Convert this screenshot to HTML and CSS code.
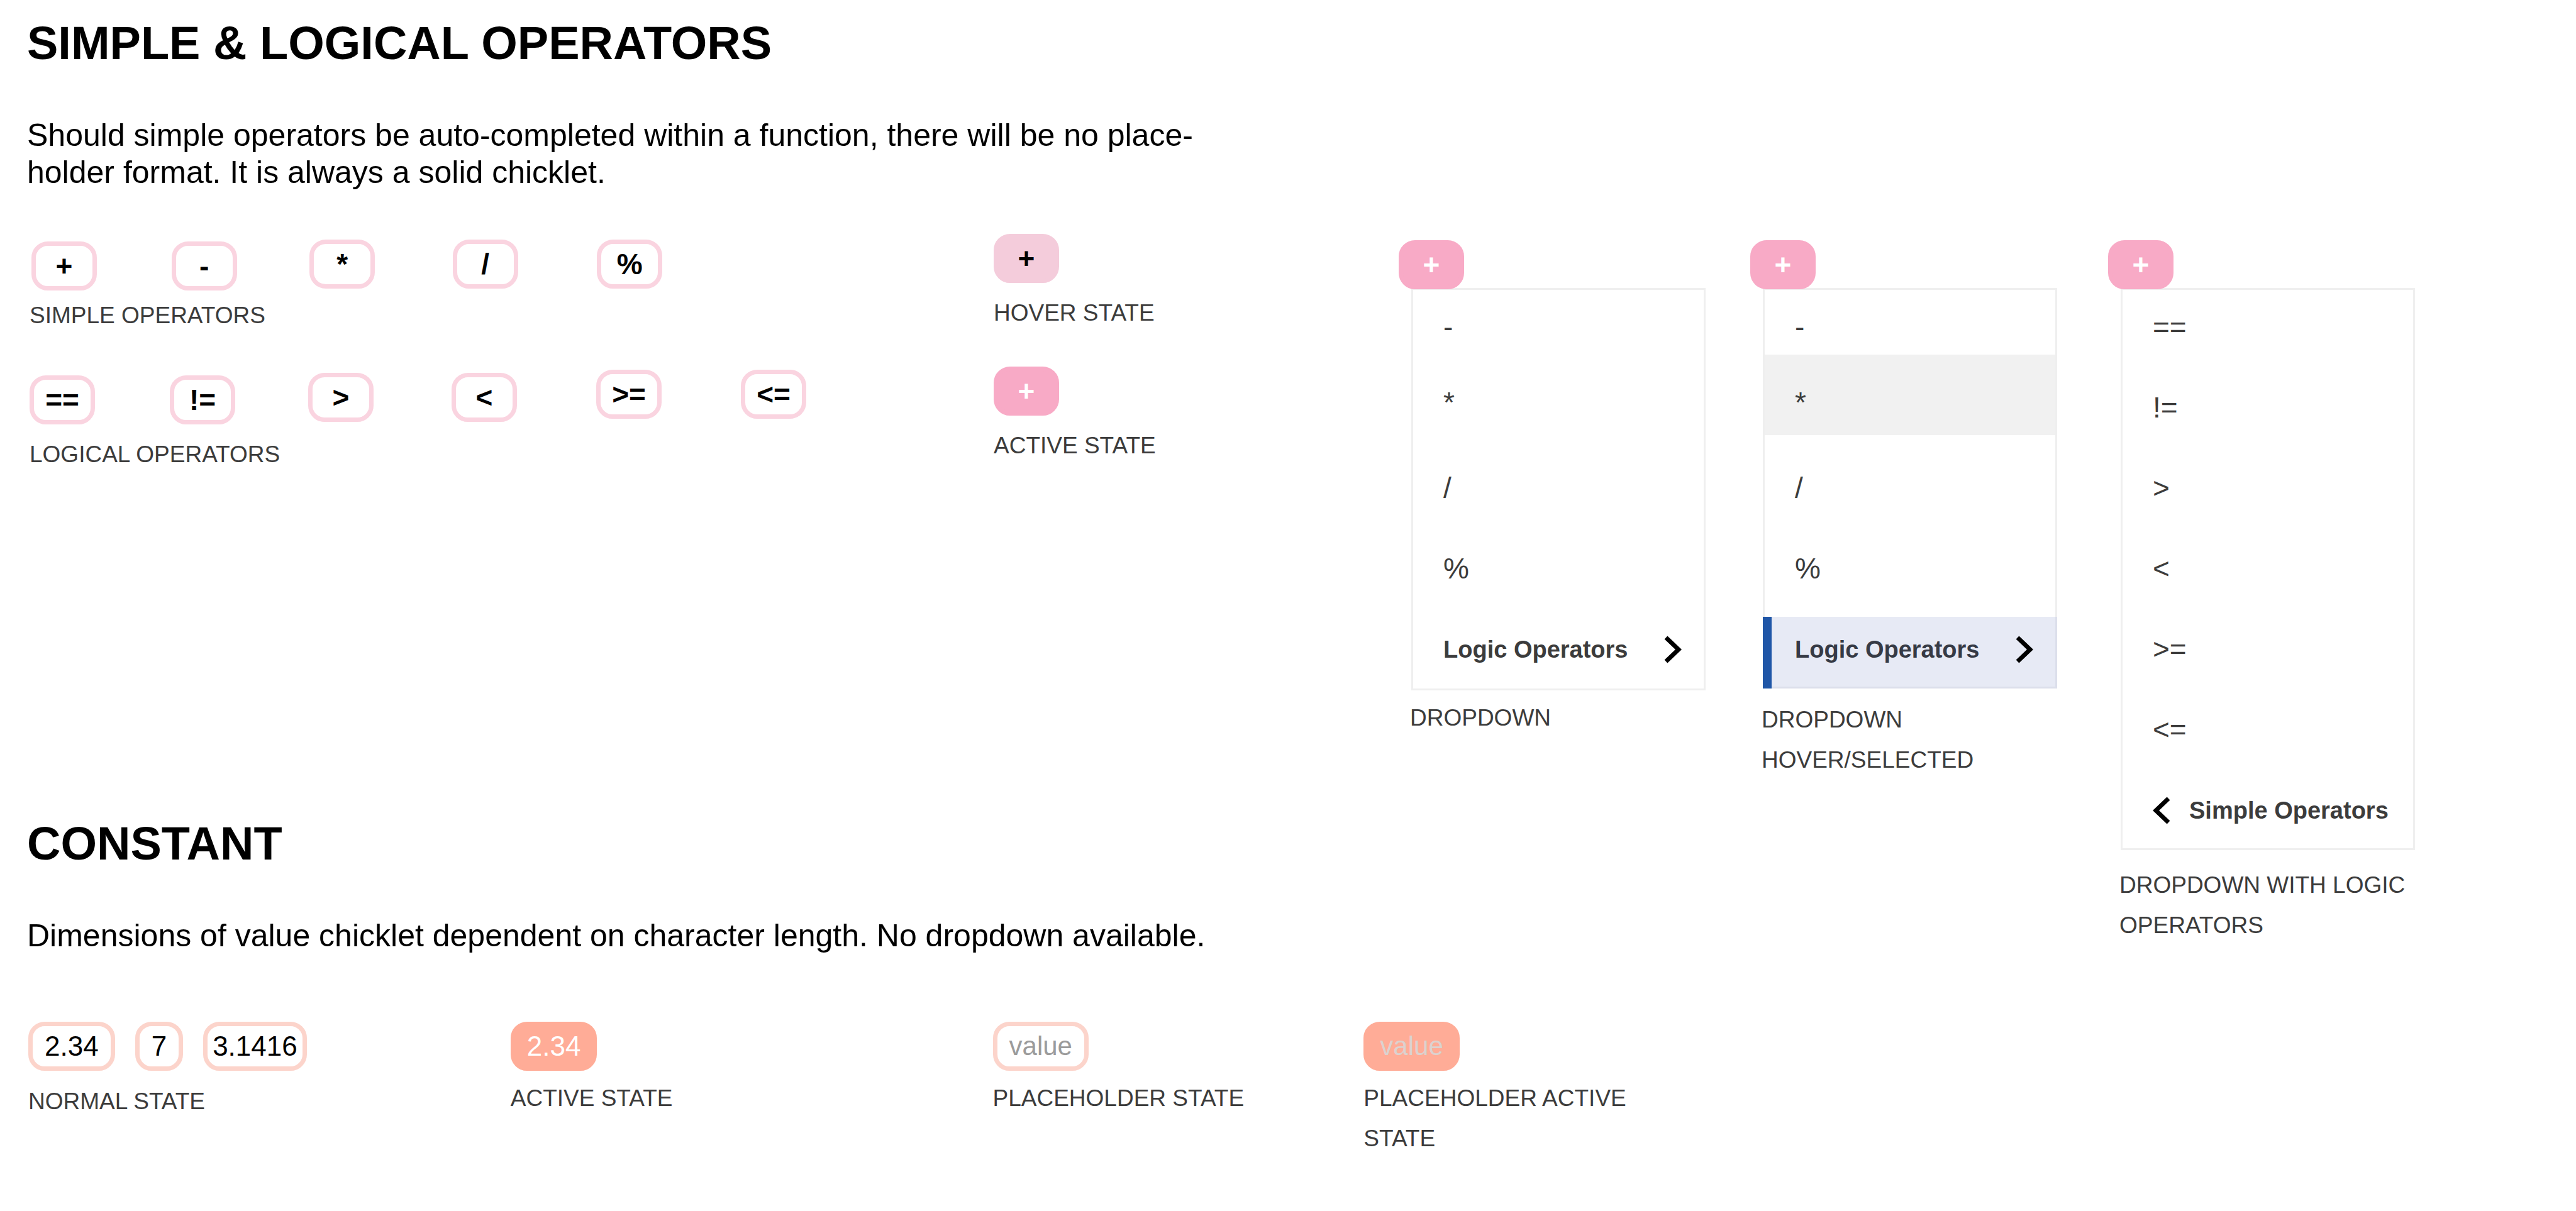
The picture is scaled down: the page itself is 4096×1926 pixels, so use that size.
FILE: index.html
```html
<!DOCTYPE html>
<html lang="en">
<head>
<meta charset="utf-8">
<meta name="viewport" content="width=device-width, initial-scale=1">
<title>Operators and constants</title>
<link rel="stylesheet" href="styles.css">
</head>
<body>
<main class="page">
  <header class="intro">
    <h1 class="title">SIMPLE &amp; LOGICAL OPERATORS</h1>
    <p class="lead">Should simple operators be auto-completed within a function, there will be no place-<br>holder format. It is always a solid chicklet.</p>
  </header>

  <section class="operators">
    <div class="sets">
      <div class="example">
        <div class="chip-row chip-row--simple">
          <button class="chip chip--low" type="button">+</button>
          <button class="chip chip--low" type="button">-</button>
          <button class="chip" type="button">*</button>
          <button class="chip" type="button">/</button>
          <button class="chip" type="button">%</button>
        </div>
        <p class="caption">SIMPLE OPERATORS</p>
      </div>
      <div class="example example--roomy">
        <div class="chip-row">
          <button class="chip chip--low" type="button">==</button>
          <button class="chip chip--low" type="button">!=</button>
          <button class="chip chip--mid" type="button">&gt;</button>
          <button class="chip chip--mid" type="button">&lt;</button>
          <button class="chip" type="button">&gt;=</button>
          <button class="chip" type="button">&lt;=</button>
        </div>
        <p class="caption">LOGICAL OPERATORS</p>
      </div>
    </div>
    <div class="states">
      <div class="example example--roomy">
        <button class="chip chip--hover" type="button">+</button>
        <p class="caption">HOVER STATE</p>
      </div>
      <div class="example example--roomy">
        <button class="chip chip--active" type="button">+</button>
        <p class="caption">ACTIVE STATE</p>
      </div>
    </div>
  </section>

  <section class="dropdown">
    <button class="chip chip--active" type="button">+</button>
    <ul class="menu">
      <li><button class="item" type="button">-</button></li>
      <li><button class="item item--star" type="button">*</button></li>
      <li><button class="item" type="button">/</button></li>
      <li><button class="item" type="button">%</button></li>
      <li><button class="item item--link" type="button">Logic Operators
        <svg class="arrow" viewBox="0 0 28 44" aria-hidden="true"><path d="M3 3 L23 22 L3 41"/></svg></button></li>
    </ul>
    <p class="caption">DROPDOWN</p>
  </section>

  <section class="dropdown dropdown--selected">
    <button class="chip chip--active" type="button">+</button>
    <ul class="menu">
      <li><button class="item" type="button">-</button></li>
      <li><button class="item item--star item--hover" type="button">*</button></li>
      <li><button class="item" type="button">/</button></li>
      <li><button class="item" type="button">%</button></li>
      <li><button class="item item--link item--selected" type="button">Logic Operators
        <svg class="arrow" viewBox="0 0 28 44" aria-hidden="true"><path d="M3 3 L23 22 L3 41"/></svg></button></li>
    </ul>
    <p class="caption">DROPDOWN HOVER/SELECTED</p>
  </section>

  <section class="dropdown dropdown--logic">
    <button class="chip chip--active" type="button">+</button>
    <ul class="menu">
      <li><button class="item" type="button">==</button></li>
      <li><button class="item" type="button">!=</button></li>
      <li><button class="item" type="button">&gt;</button></li>
      <li><button class="item" type="button">&lt;</button></li>
      <li><button class="item" type="button">&gt;=</button></li>
      <li><button class="item" type="button">&lt;=</button></li>
      <li><button class="item item--link item--back" type="button">
        <svg class="arrow" viewBox="0 0 28 44" aria-hidden="true"><path d="M25 3 L5 22 L25 41"/></svg>Simple Operators</button></li>
    </ul>
    <p class="caption">DROPDOWN WITH LOGIC OPERATORS</p>
  </section>

  <section class="constant">
    <h1 class="title">CONSTANT</h1>
    <p class="lead">Dimensions of value chicklet dependent on character length. No dropdown available.</p>
    <div class="values">
      <div class="example example--roomy">
        <div class="value-row">
          <button class="chip chip--value" type="button">2.34</button>
          <button class="chip chip--value" type="button">7</button>
          <button class="chip chip--value chip--long" type="button">3.1416</button>
        </div>
        <p class="caption">NORMAL STATE</p>
      </div>
      <div class="example">
        <button class="chip chip--value chip--value-active" type="button">2.34</button>
        <p class="caption">ACTIVE STATE</p>
      </div>
      <div class="example">
        <button class="chip chip--value chip--placeholder" type="button">value</button>
        <p class="caption">PLACEHOLDER STATE</p>
      </div>
      <div class="example">
        <button class="chip chip--value chip--value-active chip--placeholder" type="button">value</button>
        <p class="caption">PLACEHOLDER ACTIVE STATE</p>
      </div>
    </div>
  </section>
</main>
</body>
</html>
```
FILE: styles.css
```css
* {
  box-sizing: border-box;
}

body {
  margin: 0;
  background: #fff;
  color: #000;
  font-family: "Liberation Sans", Arial, sans-serif;
}

h1, p, ul {
  margin: 0;
  padding: 0;
}

button {
  margin: 0;
  font-family: inherit;
  cursor: pointer;
}

.page {
  display: grid;
  grid-template-columns: minmax(0, 2224fr) minmax(0, 559fr) minmax(0, 569fr) minmax(0, 744fr);
  padding: 24px 0 80px;
}

/* Headings and copy */

.intro {
  grid-column: 1 / -1;
  padding-left: 43px;
  margin-bottom: 68px;
}

.title {
  font-size: 74px;
  line-height: 90px;
  font-weight: 700;
}

.lead {
  margin-top: 72px;
  font-size: 50px;
  line-height: 59px;
}

.caption {
  max-width: 500px;
  color: #3c3c3c;
  font-size: 37px;
  line-height: 64px;
}

/* Operator examples */

.operators {
  display: grid;
  grid-template-columns: minmax(0, 1533fr) minmax(0, 644fr);
  align-items: start;
  padding-left: 47px;
}

.sets {
  display: flex;
  flex-direction: column;
  gap: 54px;
  padding-top: 9px;
}

.states {
  display: flex;
  flex-direction: column;
  gap: 53px;
}

.example {
  display: flex;
  flex-direction: column;
  align-items: flex-start;
  gap: 8px;
}

.example--roomy {
  gap: 16px;
}

.chip-row {
  display: grid;
  grid-template-columns: 223fr 220fr 228fr 230fr 230fr 402fr;
  align-items: start;
  justify-items: start;
  width: 100%;
  height: 87px;
}

.chip-row--simple {
  height: 81px;
  padding-left: 3px;
}

/* Chicklets */

.chip {
  display: flex;
  align-items: center;
  justify-content: center;
  width: 104px;
  height: 78px;
  padding: 0;
  border: 7px solid #fad4e0;
  border-radius: 26px;
  background: #fff;
  color: #000;
  font-size: 46px;
  line-height: 60px;
  font-weight: 700;
}

.chip--low {
  align-self: end;
}

.chip--mid {
  align-self: center;
}

.chip--hover {
  border-color: #f4ccdb;
  background: #f4ccdb;
}

.chip--active {
  border-color: #f8aac6;
  background: #f8aac6;
  color: #fff;
}

.chip--value {
  width: auto;
  padding: 0 19px;
  border-color: #fcd4cb;
  font-size: 44px;
  font-weight: 400;
}

.chip--long {
  padding: 0 8px;
}

.chip--value-active {
  border-color: #ffac97;
  background: #ffac97;
  color: #fff;
}

.chip--placeholder {
  color: #9b9b9b;
  font-size: 42px;
}

.chip--value-active.chip--placeholder {
  color: #dcd2cf;
}

/* Dropdowns */

.dropdown {
  padding-top: 10px;
}

.dropdown--logic {
  grid-column: 4;
  grid-row: 2 / span 2;
}

.dropdown .chip {
  position: relative;
}

.dropdown .caption {
  margin: 12px 0 0 18px;
}

.dropdown--selected .caption {
  margin-top: 18px;
}

.dropdown--logic .caption {
  margin-top: 24px;
}

.menu {
  width: 468px;
  margin: -2px 0 0 20px;
  padding-top: 29px;
  border: 3px solid #efefef;
  background: #fff;
  list-style: none;
}

.item {
  display: flex;
  align-items: center;
  width: 100%;
  padding: 54px 0 14px 48px;
  border: 0;
  background: transparent;
  color: #3c3c3c;
  font-size: 46px;
  line-height: 60px;
}

/* The first entry sits tight under the chicklet. */
.menu li:first-child .item {
  padding-top: 0;
}

.item--star {
  padding-top: 46px;
  padding-bottom: 22px;
}

.item--hover {
  background: #f1f1f1;
}

.item--link {
  justify-content: space-between;
  margin-top: 33px;
  padding: 22px 35px 32px 48px;
  font-size: 38px;
  font-weight: 700;
}

.item--selected {
  width: calc(100% + 6px);
  margin: 33px -3px -3px;
  padding-left: 51px;
  padding-right: 38px;
  background: #e7eaf5;
  box-shadow: inset 14px 0 #1f56a7, inset -3px -3px #dcdfeb;
  color: #363a45;
}

.item--back {
  justify-content: flex-start;
  gap: 30px;
  padding-bottom: 30px;
}

.arrow {
  width: 28px;
  height: 44px;
  fill: none;
  stroke: #000;
  stroke-width: 7;
}

/* Constants */

.constant {
  grid-column: 1 / 4;
  grid-row: 3;
  padding: 56px 0 0 43px;
}

.values {
  display: grid;
  grid-template-columns: minmax(0, 767fr) minmax(0, 767fr) minmax(0, 590fr) minmax(0, 1184fr);
  align-items: start;
  margin-top: 107px;
  padding-left: 2px;
}

.values .example {
  gap: 12px;
}

.values .example--roomy {
  gap: 17px;
}

.value-row {
  display: flex;
  gap: 32px;
}
```
